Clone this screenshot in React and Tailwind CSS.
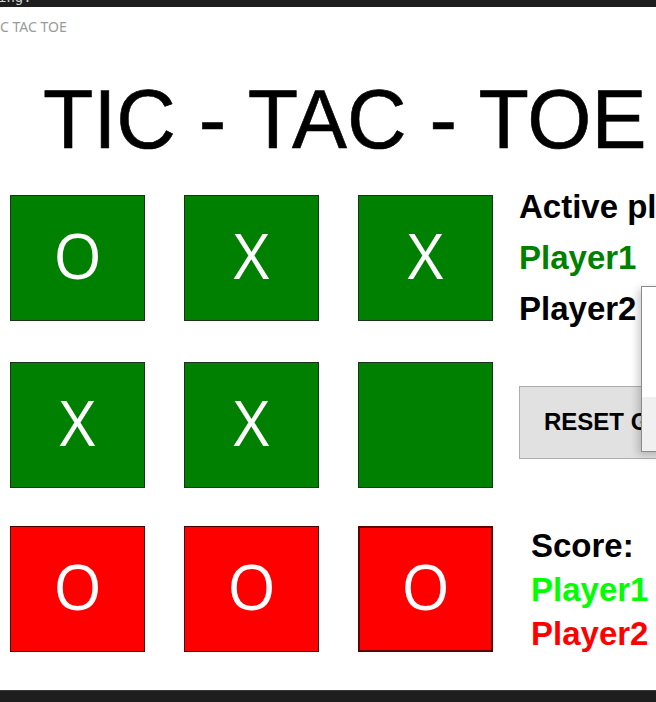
import React from "react";

const board = [
  ["O", "X", "X"],
  ["X", "X", ""],
  ["O", "O", "O"],
];

function Cell({ v, red, focus }) {
  const cls = red
    ? focus
      ? "bg-[#ff0000] border-2 border-[#5c0000]"
      : "bg-[#ff0000] border border-[#4a0000]"
    : "bg-[#008000] border border-[#1b321b]";
  return (
    <div
      className={`w-[135px] h-[126px] flex items-center justify-center pb-[6px] text-white text-[62px] leading-none ${cls}`}
      style={{ fontFamily: '"Open Sans", "Noto Sans", sans-serif' }}
    >
      {v}
    </div>
  );
}

export default function App() {
  const arial = { fontFamily: '"Liberation Sans", Arial, sans-serif' };
  return (
    <div className="relative w-[656px] h-[702px] overflow-hidden bg-white flex flex-col">
      {/* top dark bar */}
      <div className="h-[7px] bg-[#1e1e1e] overflow-hidden shrink-0">
        <div
          className="mt-[-11px] text-[14px] leading-[16px] text-[#cfcfcf] ml-[-2px]"
          style={{ fontFamily: '"DejaVu Sans Mono", monospace' }}
        >
          ing:
        </div>
      </div>
      {/* window title */}
      <div
        className="pt-[13px] h-[27px] text-[14px] leading-[14px] text-[#9a9a9a] whitespace-nowrap shrink-0"
        style={{ fontFamily: '"Noto Sans", sans-serif' }}
      >
        C TAC TOE
      </div>
      {/* heading */}
      <div
        className="mt-[44px] pl-[43px] text-[82.5px] leading-none text-black whitespace-nowrap shrink-0 [-webkit-text-stroke:0.6px_black]"
        style={arial}
      >
        TIC - TAC - TOE
      </div>
      {/* main */}
      <div className="mt-[20px] flex items-start shrink-0">
        <div className="ml-[10px] mt-[14px] flex flex-col">
          <div className="flex gap-[39px]">
            {board[0].map((v, i) => (
              <Cell key={i} v={v} />
            ))}
          </div>
          <div className="flex gap-[39px] mt-[41px]">
            {board[1].map((v, i) => (
              <Cell key={i} v={v} />
            ))}
          </div>
          <div className="flex gap-[39px] mt-[38px]">
            {board[2].map((v, i) => (
              <Cell key={i} v={v} red focus={i === 2} />
            ))}
          </div>
        </div>
        <div className="ml-[26px] flex flex-col whitespace-nowrap" style={arial}>
          <div className="text-[33px] leading-[51px] font-bold text-black">Active player:</div>
          <div className="text-[33px] leading-[51px] font-bold text-[#008000]">Player1</div>
          <div className="text-[33px] leading-[51px] font-bold text-black">Player2</div>
          <div className="mt-[52px] h-[73px] w-[220px] bg-[#e1e1e1] border border-[#adadad] flex items-center pl-[24px] text-[24px] font-bold text-black">
            RESET GAME
          </div>
          <div className="mt-[65px] ml-[12px] flex flex-col">
            <div className="text-[33px] leading-[44px] font-bold text-black">Score:</div>
            <div className="text-[33px] leading-[44px] font-bold text-[#00ff00]">Player1</div>
            <div className="text-[33px] leading-[44px] font-bold text-[#ff0000]">Player2</div>
          </div>
        </div>
      </div>
      {/* bottom bar */}
      <div className="mt-auto h-[12px] bg-[#1e1e1e] border-t border-[#3a3a3a] shrink-0" />

      {/* overlapping dialog */}
      <div className="absolute left-[641px] top-[286px] w-[120px] h-[166px] bg-white border border-[#8a8a8a] shadow-[-3px_3px_8px_rgba(0,0,0,0.2)] flex flex-col">
        <div className="flex-1" />
        <div className="h-[54px] bg-[#f0f0f0]" />
      </div>
    </div>
  );
}
